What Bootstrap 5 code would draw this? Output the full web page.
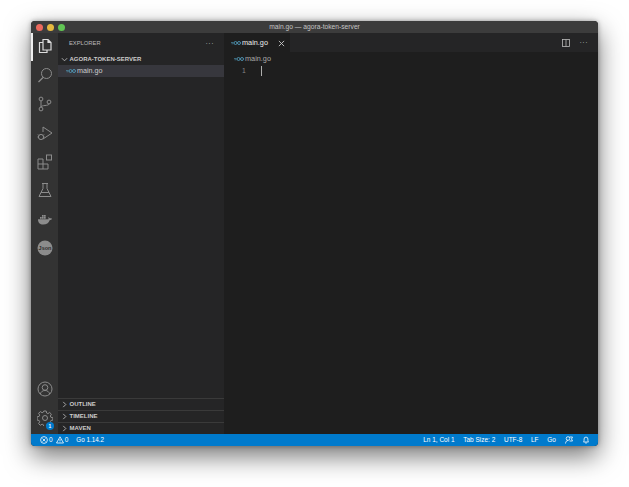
<!DOCTYPE html>
<html lang="en"><head><meta charset="utf-8"><title>main.go</title>
<link rel="stylesheet" href="https://cdn.jsdelivr.net/npm/bootstrap@5.3.0/dist/css/bootstrap.min.css">
<style>
html,body{height:487px;overflow:hidden;background:#fff}
body{padding:21px 31px 41px;font-family:"Liberation Sans",Arial,sans-serif;color:#ccc}
.win{height:425px;width:567px;border-radius:4px;overflow:hidden;box-shadow:0 10px 26px rgba(0,0,0,.55),0 0 5px rgba(0,0,0,.35);background:#1e1e1e}
.ttl{height:12px;background:#3c3c3c;font-size:6.7px;color:#c4c4c4;line-height:12px;position:relative;text-align:center}
.lights{position:absolute;left:5px;top:3px}
.lt{width:7px;height:7px;border-radius:50%;display:block}
.main{height:401px}
.act{width:27px;background:#333;flex:none;padding-bottom:1.5px}
.act-top{margin-top:-1px}
.ai{height:28.8px;width:27px;position:relative;flex:none}
.ai svg{width:16px;height:16px;fill:none;stroke:#8c8c8c;stroke-width:1}
.ai.on svg{stroke:#ddd}
.ai.on::before{content:"";position:absolute;left:0;top:1px;bottom:0;width:1.5px;background:#eee}
.sbar{width:166px;background:#252526;flex:none}
.shead{height:20px;font-size:5.8px;color:#bbb;padding:0 10px 0 11px}
.dots{font-size:7px;letter-spacing:.5px;color:#bbb;line-height:1}
.proj{height:11px;font-size:6px;font-weight:700;color:#ccc;padding:1px 0 0 3px;gap:1.500px}
.frow{height:12px;background:#37373d;font-size:7.200px;color:#ccc;padding-left:8px;gap:1px;margin-top:1px}
.frow span{position:relative;top:.5px}
.panes{margin-top:auto;padding-bottom:.5px}
.pn{height:12px;border-top:1px solid #3a3a3a;font-size:6px;font-weight:700;color:#ccc;padding-left:3px;gap:1.500px}
.chev{width:7px;height:7px;fill:none;stroke:#bbb;stroke-width:1;flex:none}
.gi{width:10px;height:6px;flex:none}
.edit{min-width:0;background:#1e1e1e}
.tabs{height:19px;background:#252526;padding-right:10px;flex:none}
.tb{width:66px;height:19px;background:#1e1e1e;font-size:7.300px;color:#eee;padding:1px 5px 0 7px;gap:1px}
.closex{width:7px;height:7px;stroke:#ccc;stroke-width:1;fill:none;margin-left:auto}
.crumb{height:13px;font-size:7.300px;color:#a9a9a9;padding:1px 0 0 10px;gap:1px}
.cline{font-size:6.800px;color:#858585;height:12px;padding-left:18px;gap:15px;position:relative}
.caret{width:1px;height:10px;background:#aeafad}
.acts{gap:10px}
.stat{height:12px;background:#007acc;color:#fff;font-size:6.500px;padding:0 8px 0 9px;flex:none}
.stat svg{width:8px;height:8px;fill:none;stroke:#fff;stroke-width:.8;flex:none}
.bdg{position:absolute;right:4px;bottom:3px;width:8px;height:8px;border-radius:50%;background:#007acc;color:#fff;font-size:5px;font-weight:700;line-height:8px;text-align:center}
.gogo{font-size:6.300px}
.rightstat{gap:8.600px}
.fbgap{margin-left:1px}
.bellgap{margin-left:0}
.warnico{margin-left:2px}
</style></head><body>
<div class="win d-flex flex-column">
 <div class="ttl flex-shrink-0">
  <div class="lights d-flex gap-1"><span class="lt" style="background:#ed6a5e"></span><span class="lt" style="background:#e6b93f"></span><span class="lt" style="background:#61c554"></span></div>
  main.go — agora-token-server
 </div>
 <div class="main d-flex flex-grow-1">
  <div class="act d-flex flex-column">
   <div class="ai on act-top d-flex align-items-center justify-content-center"><svg viewBox="0 0 16 16"><path d="M6 1.500h5l3 3v7.500H6zM11 1.500v3h3M6 4.500H2.500v10h7.500V12" stroke-width="1.200"/></svg></div>
   <div class="ai d-flex align-items-center justify-content-center"><svg viewBox="0 0 16 16"><circle cx="9.500" cy="6.500" r="5"/><path d="M6 10.500L1.500 15" stroke-width="1.200"/></svg></div>
   <div class="ai d-flex align-items-center justify-content-center"><svg viewBox="0 0 16 16"><circle cx="4" cy="3" r="1.900"/><circle cx="4" cy="13" r="1.900"/><circle cx="12" cy="6" r="1.900"/><path d="M4 5v6M12 8c0 2-8 1-8 3"/></svg></div>
   <div class="ai d-flex align-items-center justify-content-center"><svg viewBox="0 0 16 16"><path d="M6 2l9 6-9 6M6 2v5"/><circle cx="4" cy="12" r="2.600"/><path d="M1 9.500l1 1M7 9.500l-1 1M.5 12h1M6.500 12h1"/></svg></div>
   <div class="ai d-flex align-items-center justify-content-center"><svg viewBox="0 0 16 16"><path d="M1 5h5v5h5v5H1zM1 10h5v5"/><rect x="9.500" y="1" width="5" height="5"/></svg></div>
   <div class="ai d-flex align-items-center justify-content-center"><svg viewBox="0 0 16 16"><path d="M5 1.500h6M6 1.500v5L2 14.500h12L10 6.500v-5M4 10.500h8"/></svg></div>
   <div class="ai d-flex align-items-center justify-content-center"><svg viewBox="0 0 16 16"><path style="fill:#8c8c8c;stroke:none" d="M1 8.200h10.400c.3-.9.1-1.700-.3-2.200.8.2 1.300.7 1.500 1.300.7-.2 1.500-.1 2.400.4-.5 1-1.300 1.300-2.200 1.300C11.800 12 9.500 13.500 6.200 13.500 2.800 13.500 1 11.500 1 8.200zM3 6h1.700v1.700H3zM5 6h1.700v1.700H5zM7 6h1.700v1.700H7zM5 4h1.700v1.700H5zM7 4h1.700v1.700H7z"/></svg></div>
   <div class="ai d-flex align-items-center justify-content-center"><svg viewBox="0 0 16 16"><circle cx="8" cy="8" r="7.500" style="fill:#8c8c8c;stroke:none"/><text x="8" y="10" text-anchor="middle" style="fill:#2d2d2d;stroke:none;font:700 5.500px 'Liberation Sans',sans-serif">Json</text></svg></div>
   <div class="ai mt-auto d-flex align-items-center justify-content-center"><svg viewBox="0 0 16 16"><circle cx="8" cy="8" r="7"/><circle cx="8" cy="6.500" r="2.800"/><path d="M3.300 13c.8-2.500 2.500-3.500 4.700-3.500s3.900 1 4.700 3.500"/></svg></div>
   <div class="ai d-flex align-items-center justify-content-center"><svg viewBox="0 0 16 16"><circle cx="8" cy="8" r="2.500"/><path d="M6.800 1h2.400l.4 2 1.300.6 1.800-1.100 1.700 1.700-1.100 1.800.6 1.300 2 .4v2.400l-2 .4-.6 1.300 1.100 1.800-1.700 1.700-1.800-1.100-1.300.6-.4 2H6.800l-.4-2-1.300-.6-1.800 1.100-1.700-1.700 1.100-1.800-.6-1.300-2-.4V6.800l2-.4.6-1.300-1.100-1.800 1.700-1.700 1.800 1.100 1.300-.6z"/></svg><span class="bdg">1</span></div>
  </div>
  <div class="sbar d-flex flex-column">
   <div class="shead d-flex align-items-center justify-content-between flex-shrink-0"><span>EXPLORER</span><span class="dots">···</span></div>
   <div class="proj d-flex align-items-center flex-shrink-0"><svg class="chev" viewBox="0 0 8 8"><path d="M1 2.500l3 3 3-3"/></svg>AGORA-TOKEN-SERVER</div>
   <div class="frow d-flex align-items-center flex-shrink-0"><svg class="gi" viewBox="0 0 20 12"><path d="M0 5h5M1 7.500h4" stroke="#519aba" stroke-width="1.200"/><circle cx="9" cy="6" r="3" fill="none" stroke="#519aba" stroke-width="1.800"/><circle cx="16" cy="6" r="3" fill="none" stroke="#519aba" stroke-width="1.800"/></svg><span>main.go</span></div>
   <div class="panes">
    <div class="pn d-flex align-items-center"><svg class="chev" viewBox="0 0 8 8"><path d="M2.500 1l3 3-3 3"/></svg>OUTLINE</div>
    <div class="pn d-flex align-items-center"><svg class="chev" viewBox="0 0 8 8"><path d="M2.500 1l3 3-3 3"/></svg>TIMELINE</div>
    <div class="pn d-flex align-items-center"><svg class="chev" viewBox="0 0 8 8"><path d="M2.500 1l3 3-3 3"/></svg>MAVEN</div>
   </div>
  </div>
  <div class="edit flex-grow-1 d-flex flex-column">
   <div class="tabs d-flex justify-content-between align-items-center">
    <div class="tb d-flex align-items-center"><svg class="gi" viewBox="0 0 20 12"><path d="M0 5h5M1 7.500h4" stroke="#519aba" stroke-width="1.200"/><circle cx="9" cy="6" r="3" fill="none" stroke="#519aba" stroke-width="1.800"/><circle cx="16" cy="6" r="3" fill="none" stroke="#519aba" stroke-width="1.800"/></svg>main.go<svg class="closex" viewBox="0 0 8 8"><path d="M1 1l6 6M7 1l-6 6"/></svg></div>
    <div class="acts d-flex align-items-center"><svg width="8" height="8" viewBox="0 0 8 8" fill="none" stroke="#bbb" stroke-width=".8"><rect x=".5" y=".5" width="7" height="7"/><path d="M4 .5v7"/></svg><span class="dots">···</span></div>
   </div>
   <div class="crumb d-flex align-items-center flex-shrink-0"><svg class="gi" viewBox="0 0 20 12"><path d="M0 5h5M1 7.500h4" stroke="#519aba" stroke-width="1.200"/><circle cx="9" cy="6" r="3" fill="none" stroke="#519aba" stroke-width="1.800"/><circle cx="16" cy="6" r="3" fill="none" stroke="#519aba" stroke-width="1.800"/></svg>main.go</div>
   <div class="cline d-flex align-items-center flex-shrink-0"><span>1</span><span class="caret"></span></div>
  </div>
 </div>
 <div class="stat d-flex align-items-center justify-content-between">
  <div class="d-flex align-items-center gap-2">
   <span class="d-flex align-items-center" style="gap:1px"><svg viewBox="0 0 8 8"><circle cx="4" cy="4" r="3.400"/><path d="M2.500 2.500l3 3M5.500 2.500l-3 3"/></svg>0<svg viewBox="0 0 8 8" class="warnico"><path d="M4 .8L7.500 7H.5zM4 3v2.200M4 5.700v.6"/></svg>0</span>
   <span class="gogo">Go 1.14.2</span>
  </div>
  <div class="rightstat d-flex align-items-center">
   <span>Ln 1, Col 1</span><span>Tab Size: 2</span><span>UTF-8</span><span>LF</span><span>Go</span>
   <svg class="fbgap" viewBox="0 0 8 8"><circle cx="3" cy="2.500" r="1.800"/><path d="M.5 7.500c.3-2 1-3 2.500-3M4.500 1h3L6.500 3l1 2h-3"/></svg>
   <svg class="bellgap" viewBox="0 0 8 8"><path d="M1.500 6c.6-.8.600-1.500.6-3a1.900 1.900 0 0 1 3.800 0c0 1.500 0 2.200.6 3zM3.200 7h1.600"/></svg>
  </div>
 </div>
</div>
<script src="https://cdn.jsdelivr.net/npm/bootstrap@5.3.0/dist/js/bootstrap.bundle.min.js"></script>
</body></html>
